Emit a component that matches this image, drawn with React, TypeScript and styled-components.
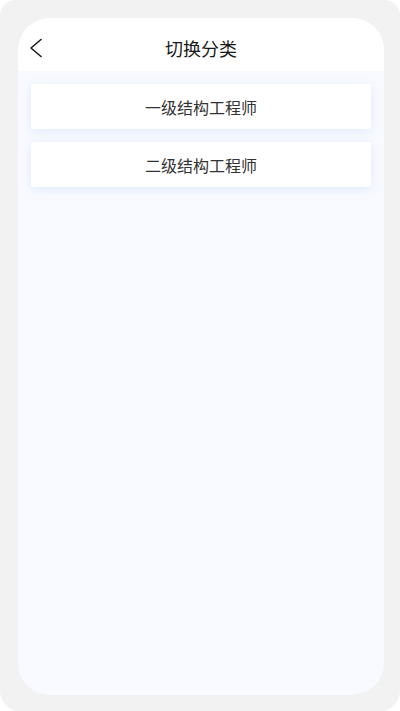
import React from "react";
import styled, { createGlobalStyle } from "styled-components";

const GlobalStyle = createGlobalStyle`
  html, body {
    margin: 0;
    padding: 0;
    background: #ffffff;
  }
  body {
    font-family: "Noto Sans CJK SC", "Noto Sans", sans-serif;
  }
`;

const Screen = styled.div`
  width: 400px;
  height: 711px;
  box-sizing: border-box;
  padding: 18px 16px 16px 18px;
  background: #f2f2f2;
  border-radius: 16px 16px 20px 20px;
  display: flex;
`;

const Frame = styled.div`
  flex: 1;
  display: flex;
  flex-direction: column;
  background: #f8faff;
  border-radius: 32px;
  overflow: hidden;
`;

const Header = styled.div`
  height: 53px;
  box-sizing: border-box;
  padding-top: 7px;
  background: #ffffff;
  display: grid;
  grid-template-columns: 48px 1fr 48px;
  align-items: center;
`;

const BackButton = styled.div`
  display: flex;
  align-items: center;
  padding-left: 11px;
  color: #1a1a1a;
`;

const Title = styled.div`
  text-align: center;
  font-size: 18px;
  color: #1a1a1a;
  letter-spacing: 0;
`;

const List = styled.div`
  display: flex;
  flex-direction: column;
  gap: 13px;
  padding: 13px 13px;
`;

const Card = styled.div`
  height: 45px;
  background: #ffffff;
  border-radius: 2px;
  box-shadow: 0 2px 10px rgba(205, 220, 250, 0.55);
  display: flex;
  align-items: center;
  justify-content: center;
  font-size: 16px;
  color: #333333;
`;

const items = ["一级结构工程师", "二级结构工程师"];

export default function App() {
  return (
    <>
      <GlobalStyle />
      <Screen>
        <Frame>
          <Header>
            <BackButton>
              <svg width="14" height="20" viewBox="0 0 14 20" fill="none">
                <path d="M12 1.5 L2 10 L12 18.5" stroke="currentColor" strokeWidth="1.6" strokeLinecap="round" strokeLinejoin="round" />
              </svg>
            </BackButton>
            <Title>切换分类</Title>
            <div />
          </Header>
          <List>
            {items.map((t) => (
              <Card key={t}>{t}</Card>
            ))}
          </List>
        </Frame>
      </Screen>
    </>
  );
}
